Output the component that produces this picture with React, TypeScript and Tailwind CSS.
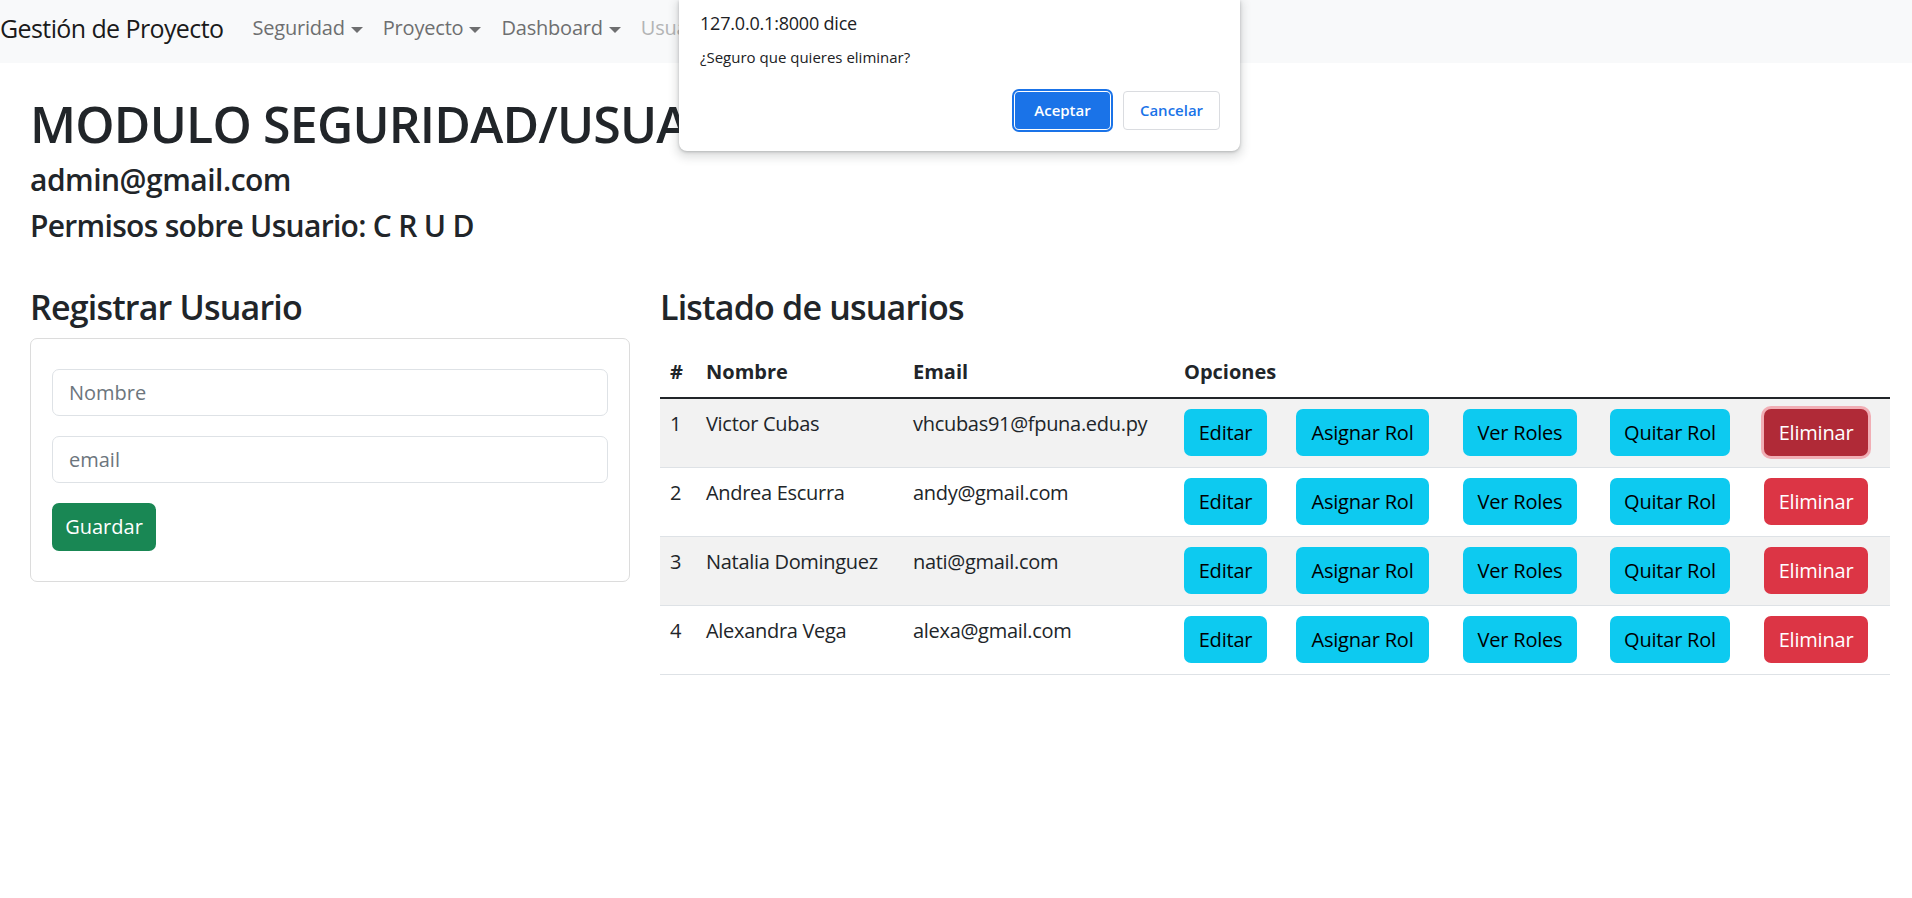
import React from 'react'

const usuarios = [
  { id: 1, nombre: 'Victor Cubas', email: 'vhcubas91@fpuna.edu.py' },
  { id: 2, nombre: 'Andrea Escurra', email: 'andy@gmail.com' },
  { id: 3, nombre: 'Natalia Dominguez', email: 'nati@gmail.com' },
  { id: 4, nombre: 'Alexandra Vega', email: 'alexa@gmail.com' },
]

function Caret() {
  return (
    <span className="inline-block w-0 h-0 ml-[6px] align-middle border-l-[6px] border-r-[6px] border-t-[6px] border-l-transparent border-r-transparent border-t-current" />
  )
}

function NavItem({ label, disabled }: { label: string; disabled?: boolean }) {
  return (
    <a className={`px-[10px] text-[20px] leading-[30px] whitespace-nowrap tracking-[-0.2px] ${disabled ? 'text-[#b3b4b5]' : 'text-[#6e6f70]'}`}>
      {label}
      {!disabled && <Caret />}
    </a>
  )
}

function InfoBtn({ label, w }: { label: string; w: string }) {
  return (
    <button className={`${w} h-[47px] rounded-[7px] bg-[#0dcaf0] text-black text-[20px] leading-[30px] tracking-[-0.2px]`}>
      {label}
    </button>
  )
}

export default function App() {
  return (
    <div className="relative min-h-[898px] bg-white text-[#212529] font-['Open_Sans',sans-serif]">
      <nav className="h-[63px] bg-[#f8f9fa] flex items-center pb-[7px]">
        <span className="text-[25px] leading-[36px] text-[#1a1a1a] mr-[19px] tracking-[-0.6px]">Gestión de Proyecto</span>
        <NavItem label="Seguridad" />
        <NavItem label="Proyecto" />
        <NavItem label="Dashboard" />
        <NavItem label="Usuarios" disabled />
      </nav>

      <main className="pl-[30px] pr-[22px]">
        <h1 className="mt-[31px] mb-[8px] text-[50px] leading-[60px] font-[550] tracking-[-0.8px]">MODULO SEGURIDAD/USUARIOS</h1>
        <h4 className="mb-[10px] text-[30px] leading-[36px] font-[550] tracking-[-0.5px]">admin@gmail.com</h4>
        <h4 className="text-[30px] leading-[36px] font-[550] tracking-[-0.7px]">Permisos sobre Usuario: C R U D</h4>

        <div className="mt-[42px] grid grid-cols-[600px_1fr] gap-[30px]">
          <section>
            <h3 className="mb-[10px] text-[34px] leading-[42px] font-[550] tracking-[-0.8px]">Registrar Usuario</h3>
            <div className="border border-[#dcdcdc] rounded-[7px] px-[21px] pt-[30px] pb-[30px]">
              <input
                placeholder="Nombre"
                className="block w-full h-[47px] mb-[20px] px-[16px] border border-[#dee2e6] rounded-[7px] text-[20px] placeholder:text-[#6c757d] outline-none"
              />
              <input
                placeholder="email"
                className="block w-full h-[47px] mb-[20px] px-[16px] border border-[#dee2e6] rounded-[7px] text-[20px] placeholder:text-[#6c757d] outline-none"
              />
              <button className="w-[104px] h-[48px] rounded-[7px] bg-[#198754] text-white text-[20px]">Guardar</button>
            </div>
          </section>

          <section>
            <h3 className="text-[34px] leading-[42px] font-[550] tracking-[-0.8px]">Listado de usuarios</h3>
            <table className="mt-[19px] w-full table-fixed border-collapse text-[20px] leading-[30px]">
              <colgroup>
                <col className="w-[36px]" />
                <col className="w-[207px]" />
                <col className="w-[271px]" />
                <col className="w-[112px]" />
                <col className="w-[167px]" />
                <col className="w-[147px]" />
                <col className="w-[154px]" />
                <col className="w-[136px]" />
              </colgroup>
              <thead>
                <tr className="border-b-2 border-[#212529]">
                  <th className="p-[10px] text-left font-bold">#</th>
                  <th className="p-[10px] text-left font-bold">Nombre</th>
                  <th className="p-[10px] text-left font-bold">Email</th>
                  <th colSpan={5} className="p-[10px] text-left font-bold">Opciones</th>
                </tr>
              </thead>
              <tbody>
                {usuarios.map((u, i) => (
                  <tr key={u.id} className={`border-b border-[#dee2e6] ${i % 2 === 0 ? 'bg-[#f2f2f2]' : 'bg-white'}`}>
                    <td className="px-[10px] pt-[10px] pb-[11px] align-top">{u.id}</td>
                    <td className="px-[10px] pt-[10px] pb-[11px] align-top whitespace-nowrap tracking-[-0.3px]">{u.nombre}</td>
                    <td className="px-[10px] pt-[10px] pb-[11px] align-top whitespace-nowrap tracking-[-0.3px]">{u.email}</td>
                    <td className="px-[10px] pt-[10px] pb-[11px] align-top"><InfoBtn label="Editar" w="w-[83px]" /></td>
                    <td className="px-[10px] pt-[10px] pb-[11px] align-top"><InfoBtn label="Asignar Rol" w="w-[133px]" /></td>
                    <td className="px-[10px] pt-[10px] pb-[11px] align-top"><InfoBtn label="Ver Roles" w="w-[114px]" /></td>
                    <td className="px-[10px] pt-[10px] pb-[11px] align-top"><InfoBtn label="Quitar Rol" w="w-[120px]" /></td>
                    <td className="px-[10px] pt-[10px] pb-[11px] align-top">
                      {i === 0 ? (
                        <button className="w-[104px] h-[47px] rounded-[7px] bg-[#b02a37] text-white text-[20px] tracking-[-0.2px] ring-[3px] ring-[#f1aeb5]">Eliminar</button>
                      ) : (
                        <button className="w-[104px] h-[47px] rounded-[7px] bg-[#dc3545] text-white text-[20px] tracking-[-0.2px]">Eliminar</button>
                      )}
                    </td>
                  </tr>
                ))}
              </tbody>
            </table>
          </section>
        </div>
      </main>

      {/* alert del navegador */}
      <div className="absolute top-0 left-[679px] w-[561px] h-[151px] bg-white rounded-b-[8px] shadow-[0_1px_3px_rgba(60,64,67,0.3),0_4px_8px_3px_rgba(60,64,67,0.15)] pl-[21px] pr-[20px] flex flex-col">
        <div className="mt-[10px] text-[18px] leading-[26px] text-[#202124] tracking-[-0.2px]">127.0.0.1:8000 dice</div>
        <div className="mt-[11px] text-[15px] leading-[20px] text-[#202124]">¿Seguro que quieres eliminar?</div>
        <div className="mt-auto mb-[21px] flex justify-end items-center gap-[13px]">
          <button className="w-[95px] h-[37px] rounded-[4px] bg-[#1a73e8] text-white text-[15px] font-semibold ring-2 ring-[#1a73e8] ring-offset-1">Aceptar</button>
          <button className="w-[97px] h-[39px] rounded-[4px] bg-white border border-[#dadce0] text-[#1a73e8] text-[15px] font-semibold">Cancelar</button>
        </div>
      </div>
    </div>
  )
}
